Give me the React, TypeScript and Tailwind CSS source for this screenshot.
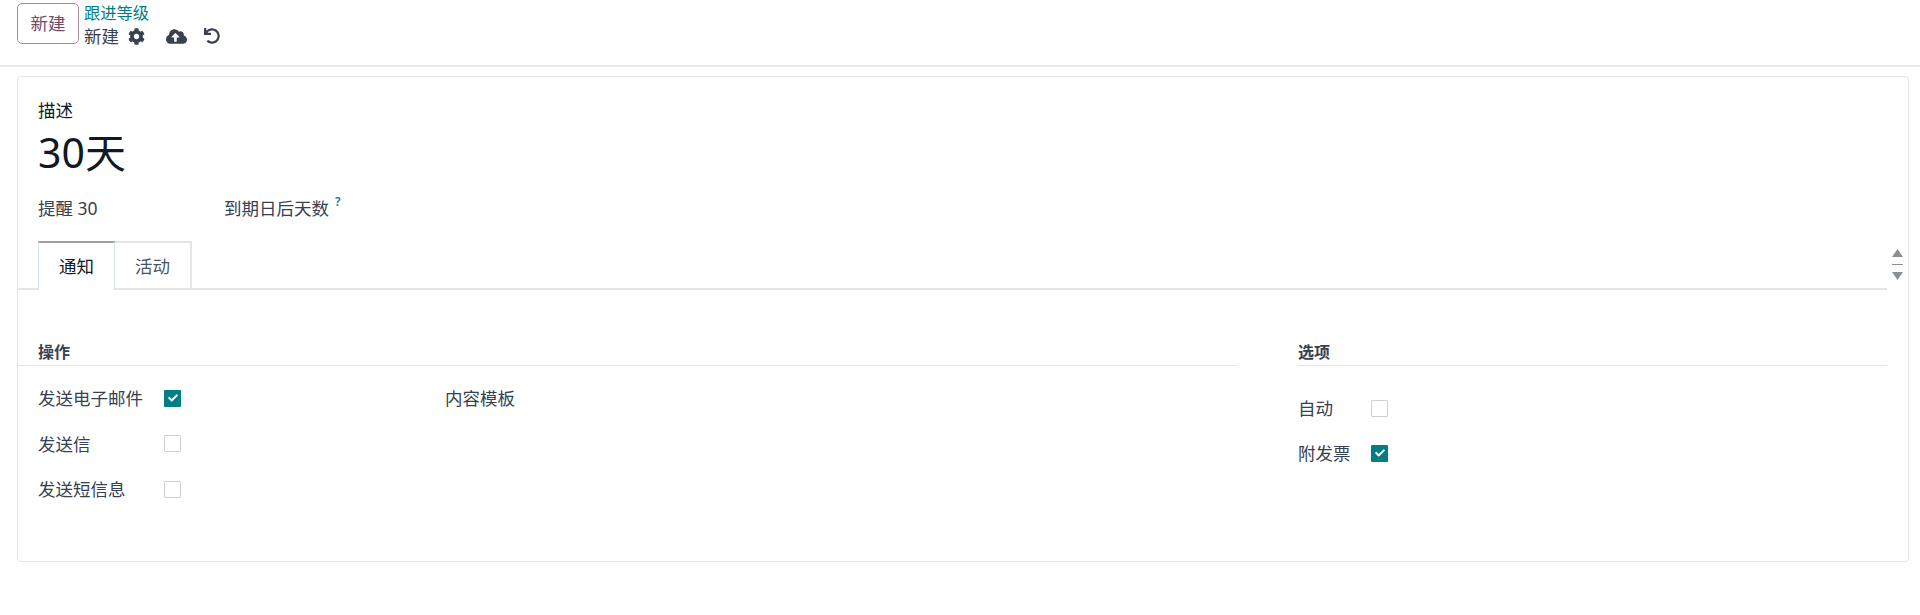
import React from "react";
import { FaCog, FaCloudUploadAlt, FaUndo, FaCheck } from "react-icons/fa";

const font = "font-['Noto_Sans','Noto_Sans_CJK_SC',sans-serif]";

function Checkbox({ checked = false }: { checked?: boolean }) {
  if (checked) {
    return (
      <span className="flex h-[17px] w-[17px] items-center justify-center rounded-[1px] bg-[#017e84]">
        <FaCheck className="text-[10px] text-white" />
      </span>
    );
  }
  return <span className="block h-[17px] w-[17px] rounded-[1px] border border-[#cfd1d5] bg-white" />;
}

function Row({ label, checked, labelWidth, className }: { label: string; checked?: boolean; labelWidth: string; className: string }) {
  return (
    <div className={`flex items-center ${className}`}>
      <span className={`${labelWidth} text-[17.5px] leading-[26px] text-[#374151]`}>{label}</span>
      <Checkbox checked={checked} />
    </div>
  );
}

export default function App() {
  return (
    <div className={`${font} h-[615px] bg-white text-[#374151]`}>
      {/* control panel */}
      <div className="flex h-[67px] items-start border-b-2 border-[#e7e9ed] pl-[17px] pt-[3px]">
        <button className="h-[41px] w-[62px] rounded-[5px] border border-[#a48a9d] text-[17.5px] text-[#714b67]">新建</button>
        <div className="ml-[5px] flex flex-col">
          <span className="text-[16.3px] leading-[20px] text-[#017e84]">跟进等级</span>
          <div className="flex items-center">
            <span className="text-[17.5px] leading-[26px] text-[#374151]">新建</span>
            <FaCog className="ml-[9px] text-[17px]" />
            <FaCloudUploadAlt className="ml-[21px] text-[21px]" />
            <FaUndo className="ml-[17px] text-[16px]" />
          </div>
        </div>
      </div>

      {/* form sheet */}
      <div className="relative mx-[17px] mt-[9px] h-[486px] w-[1892px] rounded-[4px] border border-[#e3e5e8]">
        <div className="pl-[20px] pt-[20px]">
          <div className="text-[17.5px] leading-[26px] text-[#111827]">描述</div>
          <div className="mt-[3px] text-[41px] leading-[52px] text-[#111827]">30天</div>
          <div className="mt-[17px] flex items-center text-[17.5px] leading-[26px]">
            <span className="w-[186px]">提醒 30</span>
            <span>到期日后天数</span>
            <sup className="ml-[6px] text-[12px] font-semibold text-[#017e84]">?</sup>
          </div>
        </div>

        {/* tabs */}
        <div className="mt-[20px] mr-[21px] flex border-b-2 border-[#e3e5e8] pl-[20px]">
          <div className="-mb-[2px] flex h-[49px] w-[77px] items-center justify-center border-x border-t-2 border-x-[#d5e3ee] border-t-[#a99aa6] bg-white text-[17.5px] text-[#111827]">通知</div>
          <div className="-mb-[2px] flex h-[49px] w-[77px] items-center justify-center border-r-2 border-t-2 border-[#e3e5e8] text-[17.5px] text-[#4b5563]">活动</div>
        </div>

        {/* groups */}
        <div className="mt-[50px] flex">
          <div className="w-[1219px]">
            <div className="border-b border-[#e3e5e8] pl-[20px] text-[16px] font-bold leading-[25px] text-[#374151]">操作</div>
            <div className="mt-[19px] flex pl-[20px]">
              <div className="flex w-[407px] flex-col gap-[19.5px]">
                <Row label="发送电子邮件" checked labelWidth="w-[126px]" className="h-[26px]" />
                <Row label="发送信" labelWidth="w-[126px]" className="h-[26px]" />
                <Row label="发送短信息" labelWidth="w-[126px]" className="h-[26px]" />
              </div>
              <span className="text-[17.5px] leading-[26px]">内容模板</span>
            </div>
          </div>
          <div className="ml-[61px] w-[589px]">
            <div className="border-b border-[#e3e5e8] text-[16px] font-bold leading-[25px] text-[#374151]">选项</div>
            <div className="mt-[29px] flex flex-col gap-[19px]">
              <Row label="自动" labelWidth="w-[73px]" className="h-[26px]" />
              <Row label="附发票" checked labelWidth="w-[73px]" className="h-[26px]" />
            </div>
          </div>
        </div>

        {/* sort handle */}
        <div className="absolute left-[1872px] top-[172px] flex w-[14px] flex-col items-center">
          <svg width="11" height="8" viewBox="0 0 11 8"><path d="M5.5 0 11 8H0Z" fill="#8a8f99" /></svg>
          <span className="my-[7px] block h-px w-[11px] bg-[#8a8f99]" />
          <svg width="11" height="8" viewBox="0 0 11 8"><path d="M0 0H11L5.5 8Z" fill="#8a8f99" /></svg>
        </div>
      </div>
    </div>
  );
}
